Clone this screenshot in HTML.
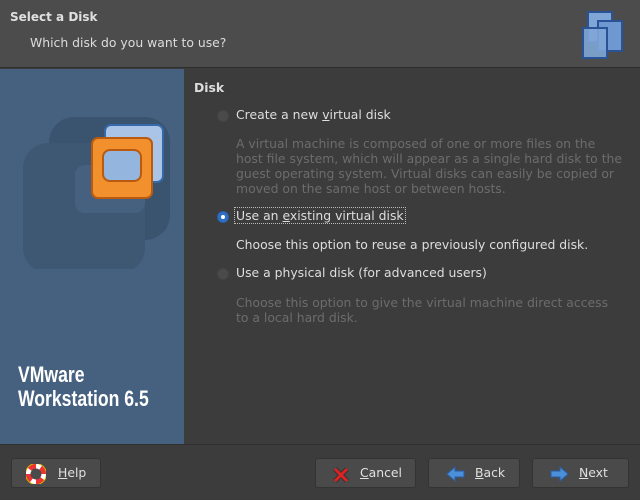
<!DOCTYPE html>
<html><head><meta charset="utf-8"><style>
*{margin:0;padding:0;box-sizing:border-box}
body{width:640px;height:500px;background:#3c3c3c;font-family:"DejaVu Sans","Liberation Sans",sans-serif;font-size:12.4px;color:#dedede;position:relative;overflow:hidden}
.hdr{position:absolute;left:0;top:0;width:640px;height:68px;background:#4c4c4c;border-bottom:1px solid #2e2e2e}
.t1{position:absolute;left:10px;top:10px;font-weight:bold;font-size:12px;color:#e0e0e0}
.t2{position:absolute;left:30px;top:35px;color:#dcdcdc}
.side{position:absolute;left:0;top:69px;width:184px;height:375px;background:#46617f}
.vm{position:absolute;left:18px;top:294px;font-family:"Liberation Sans",sans-serif;font-weight:bold;font-size:22px;line-height:24px;color:#fff;transform:scaleX(.8);transform-origin:left;white-space:nowrap}
.a{position:absolute;white-space:nowrap}
.dis{color:#6c6c6c;line-height:15px}
.rad{position:absolute;width:12px;height:12px;border-radius:50%;background:#4a4a4a;border:1px solid #444}
u{text-decoration:underline}
.btn{position:absolute;top:458px;height:30px;background:#4a4a4a;border:1px solid #333;border-radius:3px;color:#e0e0e0}
.btn span{position:absolute;top:6px}
.bot{position:absolute;left:0;top:444px;width:640px;height:1px;background:#303030}
</style></head><body>
<div class="hdr"><div class="t1">Select a Disk</div><div class="t2">Which disk do you want to use?</div>
<svg style="position:absolute;left:580px;top:8px" width="50" height="52">
<rect x="8" y="4" width="24" height="30" fill="#7fa6d6" stroke="#2a5296" stroke-width="2"/>
<rect x="18" y="13" width="24" height="30" fill="#6e98cf" stroke="#2a5296" stroke-width="2"/>
<rect x="3" y="20" width="24" height="30" fill="#7fa6d6" stroke="#2a5296" stroke-width="2" fill-opacity=".9"/>
</svg></div>
<div class="side">
<svg width="184" height="200" style="position:absolute;left:0;top:0">
<rect x="49" y="48" width="121" height="123" rx="25" fill="#3a536f"/>
<rect x="23" y="74" width="122" height="130" rx="25" fill="#3e5874"/>
<rect x="75" y="96" width="70" height="48" rx="10" fill="#46617f"/>
<rect x="105" y="56" width="58" height="57" rx="6" fill="#a9c4e6" stroke="#3569a8" stroke-width="2"/>
<rect x="116" y="69" width="30" height="30" rx="6" fill="#3d5a7c" stroke="#3569a8" stroke-width="2"/>
<rect x="92" y="69" width="60" height="60" rx="6" fill="#f2902d" stroke="#b85a10" stroke-width="2"/>
<rect x="103" y="81" width="38" height="31" rx="7" fill="#93b5de" stroke="#b85a10" stroke-width="2"/>
</svg>
<div class="vm">VMware<br>Workstation 6.5</div></div>
<div class="a" style="left:194px;top:80px;font-weight:bold">Disk</div>
<div class="rad" style="left:217px;top:110px"></div>
<div class="a" style="left:236px;top:107px">Create a new <u>v</u>irtual disk</div>
<div class="a dis" style="left:236px;top:136px">A virtual machine is composed of one or more files on the<br>host file system, which will appear as a single hard disk to the<br>guest operating system. Virtual disks can easily be copied or<br>moved on the same host or between hosts.</div>
<div class="rad" style="left:217px;top:211px;background:#2f6fc4;border-color:#2a5ea8"><div style="position:absolute;left:3px;top:3px;width:4px;height:4px;background:#fff;border-radius:50%"></div></div>
<div class="a" style="left:234px;top:207px;border:1px dotted #bbb;padding:0 1px">Use an <u>e</u>xisting virtual disk</div>
<div class="a" style="left:236px;top:237px">Choose this option to reuse a previously configured disk.</div>
<div class="rad" style="left:217px;top:268px"></div>
<div class="a" style="left:236px;top:265px">Use a physical disk (for advanced users)</div>
<div class="a dis" style="left:236px;top:295px">Choose this option to give the virtual machine direct access<br>to a local hard disk.</div>
<div class="bot"></div>
<div class="btn" style="left:11px;width:90px"><svg style="position:absolute;left:14px;top:5px" width="20" height="20"><circle cx="10" cy="10" r="8" fill="none" stroke="#e33" stroke-width="5"/><circle cx="10" cy="10" r="8" fill="none" stroke="#fff" stroke-width="5" stroke-dasharray="5 7.5"/><circle cx="10" cy="10" r="10.5" fill="none" stroke="#d8b000" stroke-width="1"/></svg><span style="left:46px"><u>H</u>elp</span></div>
<div class="btn" style="left:315px;width:101px"><svg style="position:absolute;left:16px;top:7px" width="18" height="18"><path d="M3 3L15 15M15 3L3 15" stroke="#333" stroke-width="5"/><path d="M3 3L15 15M15 3L3 15" stroke="#d22" stroke-width="3"/></svg><span style="left:44px"><u>C</u>ancel</span></div>
<div class="btn" style="left:428px;width:92px"><svg style="position:absolute;left:17px;top:7px" width="20" height="16"><path d="M1 8L9 1V5H18V11H9V15Z" fill="#4a8fd8" stroke="#2a5ea8"/></svg><span style="left:46px"><u>B</u>ack</span></div>
<div class="btn" style="left:532px;width:97px"><svg style="position:absolute;left:16px;top:7px" width="20" height="16"><path d="M19 8L11 1V5H2V11H11V15Z" fill="#4a8fd8" stroke="#2a5ea8"/></svg><span style="left:46px"><u>N</u>ext</span></div>
</body></html>
